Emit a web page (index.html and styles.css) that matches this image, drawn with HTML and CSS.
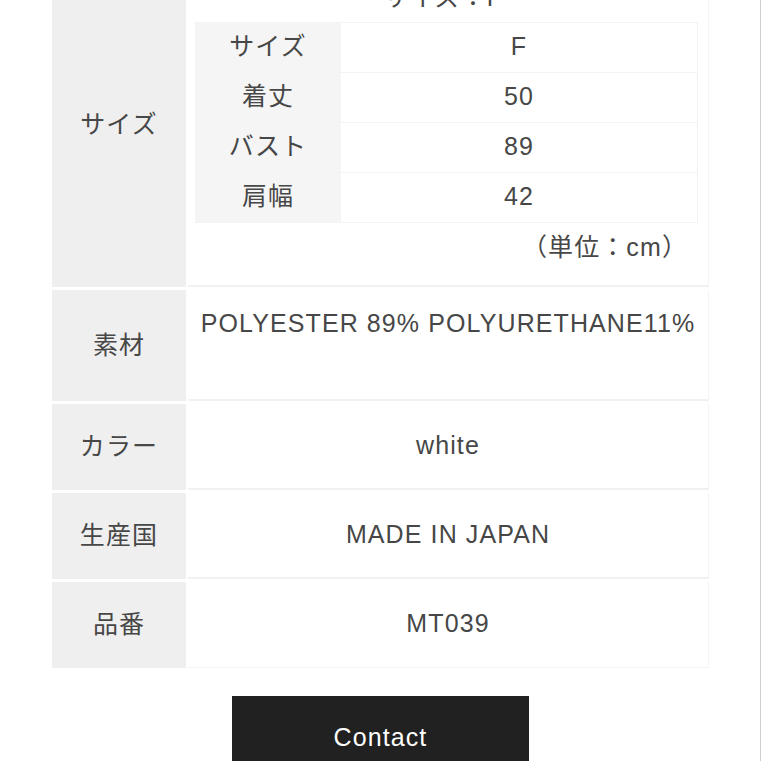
FILE: index.html
```html
<!DOCTYPE html>
<html lang="ja">
<head>
<meta charset="utf-8">
<link rel="stylesheet" href="styles.css">
</head>
<body>
<div class="page">
  <div class="spec">
    <div class="row">
      <div class="label">サイズ</div>
      <div class="value value-size">
        <div class="caption">サイズ：F</div>
        <div class="size-table">
          <div class="s-row"><div class="s-label">サイズ</div><div class="s-value">F</div></div>
          <div class="s-row"><div class="s-label">着丈</div><div class="s-value">50</div></div>
          <div class="s-row"><div class="s-label">バスト</div><div class="s-value">89</div></div>
          <div class="s-row"><div class="s-label">肩幅</div><div class="s-value">42</div></div>
        </div>
        <div class="unit">（単位：cm）</div>
      </div>
    </div>
    <div class="row">
      <div class="label">素材</div>
      <div class="value value-tall">POLYESTER 89% POLYURETHANE11%</div>
    </div>
    <div class="row">
      <div class="label">カラー</div>
      <div class="value">white</div>
    </div>
    <div class="row">
      <div class="label">生産国</div>
      <div class="value">MADE IN JAPAN</div>
    </div>
    <div class="row">
      <div class="label">品番</div>
      <div class="value">MT039</div>
    </div>
  </div>
  <div class="actions">
    <button class="contact">Contact</button>
  </div>
</div>
</body>
</html>
```

FILE: styles.css
```css
* { box-sizing: border-box; }

html, body {
  margin: 0;
  padding: 0;
  background: #fff;
}

body {
  height: 100vh;
  overflow: hidden;
  border-right: 1px solid #cfcfcf;
  font-family: "Liberation Sans", "Noto Sans CJK JP", sans-serif;
  font-size: 25px;
  letter-spacing: 1.1px;
  line-height: 36px;
  color: #474747;
}

.page {
  display: flex;
  flex-direction: column;
}

.spec {
  margin: -37px 0 0 52px;
  width: 657px;
  display: flex;
  flex-direction: column;
  gap: 3px;
}

.row {
  display: grid;
  grid-template-columns: 134px 1fr;
  column-gap: 2px;
}

.label {
  background: #efefef;
  display: flex;
  align-items: center;
  justify-content: center;
  padding-bottom: 2px;
}

.value {
  text-align: center;
  padding: 23px 0 25px;
  border-right: 1px solid #f4f4f4;
  border-bottom: 2px solid #f1f1f1;
}

.row:last-child .value {
  border-bottom: 1px solid #f4f4f4;
  padding-bottom: 26px;
}

.value-tall {
  padding: 15px 0 58px;
}

.value-size {
  padding: 16px 0 20px;
}

.caption {
  margin-left: -10px;
}

.size-table {
  margin: 7px 10px 0 7px;
  display: flex;
  flex-direction: column;
  border-bottom: 1px solid #f3f3f3;
}

.s-row {
  display: grid;
  grid-template-columns: 146px 1fr;
  height: 50px;
}

.s-label {
  background: #f5f5f5;
  display: flex;
  align-items: center;
  justify-content: center;
  padding-bottom: 3px;
}

.s-value {
  display: flex;
  align-items: center;
  justify-content: center;
  border: 1px solid #f3f3f3;
  border-left: none;
  border-bottom: none;
  padding-bottom: 3px;
}

.unit {
  margin-top: 6px;
  text-align: right;
  padding-right: 20px;
}

.actions {
  display: flex;
  justify-content: center;
  margin-top: 28px;
}

.contact {
  width: 297px;
  height: 90px;
  background: #212121;
  color: #fff;
  border: none;
  font: inherit;
  letter-spacing: 1.1px;
  padding: 23px 0 31px;
  line-height: 36px;
  display: flex;
  justify-content: center;
  align-items: flex-start;
  margin-left: 1px;
}
```
